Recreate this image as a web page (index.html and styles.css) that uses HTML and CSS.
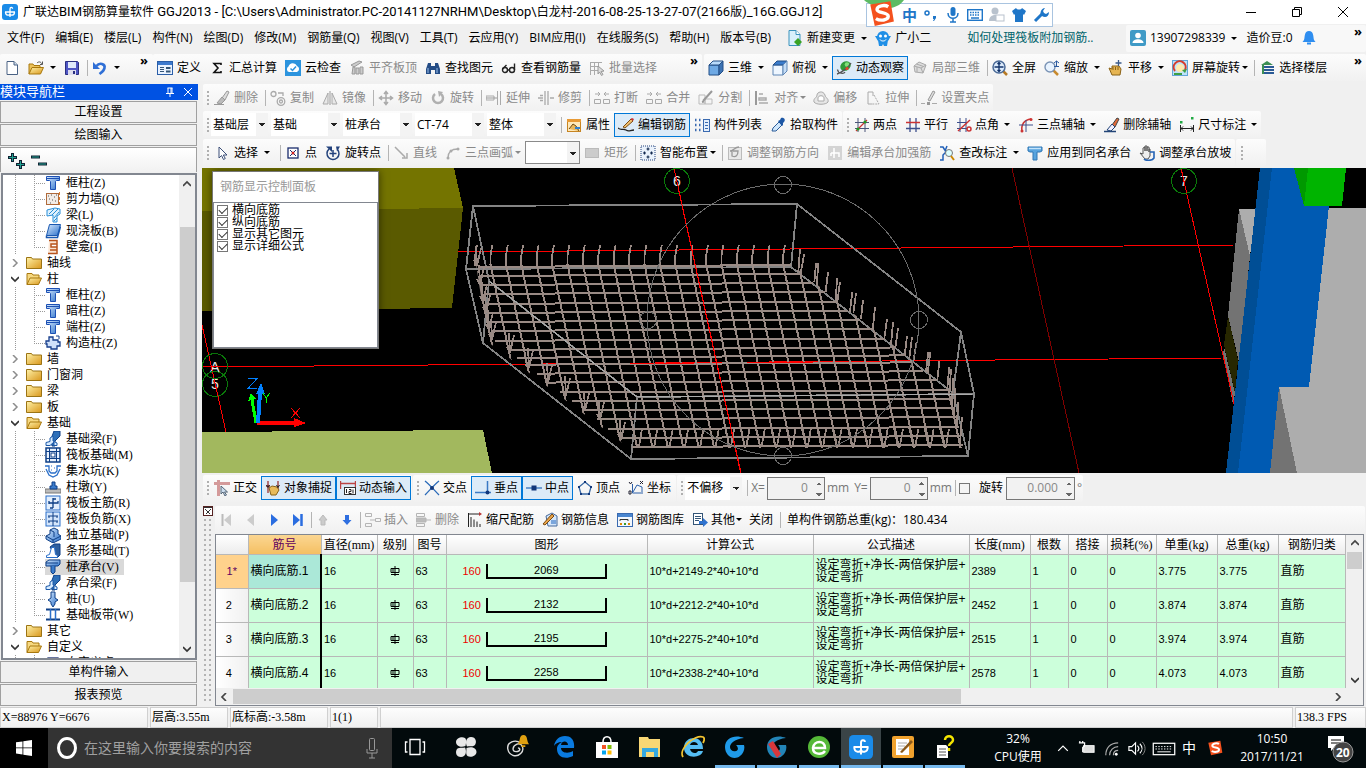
FILE: index.html
```html
<!DOCTYPE html>
<html lang="zh-CN">
<head>
<meta charset="utf-8">
<title>广联达BIM钢筋算量软件 GGJ2013</title>
<link rel="stylesheet" href="styles.css">
</head>
<body>
<svg class="defs" aria-hidden="true">
<defs>
<linearGradient id="gold" x1="0" y1="0" x2="1" y2="1"><stop offset="0" stop-color="#fff2a8"/><stop offset="1" stop-color="#d9971c"/></linearGradient>
<linearGradient id="blu" x1="0" y1="0" x2="1" y2="1"><stop offset="0" stop-color="#d8ebff"/><stop offset="1" stop-color="#2a6fc9"/></linearGradient>
</defs>
<symbol id="app" viewBox="0 0 16 16"><rect width="16" height="16" rx="3" fill="#1a8be8"/><g fill="none" stroke="#fff" stroke-width="1.300"><path d="M8 10V5c0-2 2.500-2 2.600-.3M3 8h10M3.500 8c0 4 4.500 4 4.500 1.500M12.500 8c0 4-4.500 4-4.500 1.500M8 9v4"/></g></symbol>
<symbol id="new" viewBox="0 0 16 16"><path d="M3 1.500h7l3.500 3.500v9.500H3z" fill="#fff" stroke="#4a6284"/><path d="M10 1.500V5h3.500" fill="#cfdcec" stroke="#4a6284"/></symbol>
<symbol id="open" viewBox="0 0 16 16"><path d="M1 14V4h4l1 1.500h6V8" fill="#ecc25a" stroke="#a8780e"/><path d="M1 14L4 7.500h11.500L12.500 14z" fill="url(#gold)" stroke="#a8780e"/><path d="M9 3c2-2 4-1 5 1M14.500 1.500V4.500H12" fill="none" stroke="#555"/></symbol>
<symbol id="fopen" viewBox="0 0 16 16"><path d="M1 13.500V2.500h5l1 1.500h6V7" fill="#f6d880" stroke="#a8780e"/><path d="M1 13.500L4 7h11.500L12.500 13.500z" fill="url(#gold)" stroke="#a8780e"/></symbol>
<symbol id="save" viewBox="0 0 16 16"><path d="M1.500 1.500h12l1 1v12h-13z" fill="#4e55c4" stroke="#2a2f80"/><rect x="4" y="2" width="8" height="6" fill="#dfe9fb"/><rect x="4" y="10" width="8" height="5" fill="#dde"/><rect x="9" y="11" width="2" height="3" fill="#2a2f80"/></symbol>
<symbol id="undo" viewBox="0 0 16 16"><path d="M4.500 6c3-4 9-2 8 2-.5 3-3 4.500-5 6" fill="none" stroke="#2f6fd6" stroke-width="2.600"/><path d="M1 2v7h7z" fill="#2f6fd6"/></symbol>
<symbol id="def" viewBox="0 0 16 16"><rect x=".5" y="1.500" width="15" height="13" fill="#e9f2ff" stroke="#2a5ea8"/><rect x="1" y="2" width="14" height="3" fill="#3d7ace"/><path d="M3 7.500h4M3 9.500h4M3 11.500h4" stroke="#357"/><rect x="9" y="7" width="4.500" height="2" fill="#357"/><rect x="9" y="10.500" width="4.500" height="2" fill="#357"/></symbol>
<symbol id="sum" viewBox="0 0 16 16"><path d="M12 5V3.500H5L9 8l-4 4.500H12V11" fill="none" stroke="#111" stroke-width="1.600"/></symbol>
<symbol id="cloud" viewBox="0 0 16 16"><rect width="16" height="16" fill="#2c94de"/><path d="M4 12a3 3 0 0 1-.5-5.500A4.500 4.500 0 0 1 12 6a3.200 3.200 0 0 1 0 6z" fill="#fff"/><path d="M5.500 8.500l2 2 3.500-4" fill="none" stroke="#2c94de" stroke-width="1.500"/></symbol>
<symbol id="flat" viewBox="0 0 16 16"><path d="M2 5l8-4 3 1-8 5zM4 7h2v7H3zM7 8h3v6H7zM11 7h3v7h-3z" fill="#ccc" stroke="#999"/></symbol>
<symbol id="find" viewBox="0 0 16 16"><path d="M3 3h3v3h4V3h3l2 6v5h-5v-4H6v4H1V9z" fill="#254d86"/><path d="M3 8v5M12 8v5" stroke="#9dc1ec"/></symbol>
<symbol id="glass" viewBox="0 0 16 16"><g fill="none" stroke="#222" stroke-width="1.400"><circle cx="4" cy="10" r="2.500"/><circle cx="11" cy="10" r="2.500"/><path d="M6.500 10h2M1.500 9l4-4M13.500 10V3.500"/></g></symbol>
<symbol id="batch" viewBox="0 0 16 16"><path d="M1 2.500h12M1 6.500h9M1 10.500h8M1.500 2v13M5.500 2v13M9.500 2v5" stroke="#aaa" fill="none"/><path d="M9 6l6 5-3 .5 2 3-1.500 1-2-3.500L9 14z" fill="#ddd" stroke="#999"/></symbol>
<symbol id="cube" viewBox="0 0 16 16"><path d="M1 5h10v10H1z" fill="#6ea9e4" stroke="#234f86"/><path d="M1 5l4-4h10l-4 4z" fill="#b8dafa" stroke="#234f86"/><path d="M11 5l4-4v10l-4 4z" fill="#3c73b4" stroke="#234f86"/></symbol>
<symbol id="cube2" viewBox="0 0 16 16"><path d="M1 5h10v10H1z" fill="#eef6ff" stroke="#5f86b5"/><path d="M1 5l4-4h10l-4 4z" fill="#3b7ccc" stroke="#234f86"/><path d="M11 5l4-4v10l-4 4z" fill="#c6def7" stroke="#5f86b5"/></symbol>
<symbol id="orbit" viewBox="0 0 16 16"><ellipse cx="9.500" cy="6" rx="5.500" ry="4.500" transform="rotate(-35 9.500 6)" fill="#2f9b3a"/><circle cx="11" cy="4.500" r="2.300" fill="#7fe07a"/><path d="M1 14C5 13 13 7 15 3M1.500 9.500C2 14 8 14 9 12" fill="none" stroke="#555" stroke-width="1.300"/><circle cx="11" cy="8.500" r="1.600" fill="#e8452c"/></symbol>
<symbol id="local" viewBox="0 0 16 16"><path d="M2 6l5-4 7 3-3 8-8-1z" fill="#ddd" stroke="#aaa"/><path d="M2 6l7 2 5-3M9 8l2 5M5 7v5M4.500 4l7 2.500" fill="none" stroke="#aaa"/></symbol>
<symbol id="full" viewBox="0 0 16 16"><path d="M11 11l4 4" stroke="#b77a26" stroke-width="2.500"/><circle cx="7" cy="7" r="6" fill="#dcebfb" stroke="#4c6c98" stroke-width="1.500"/><path d="M7 2.500v9M2.500 7h9M5.500 4L7 2.500 8.500 4M5.500 10L7 11.500 8.500 10" fill="none" stroke="#12336b" stroke-width="1.300"/></symbol>
<symbol id="zoom" viewBox="0 0 16 16"><path d="M9 10l5 5" stroke="#c88a2e" stroke-width="2.500"/><circle cx="6" cy="7" r="5" fill="#e8f3ff" stroke="#7a93b5" stroke-width="1.400"/><path d="M12.500 1v6M10 3l2.500-2L15 3M10 6.500h5" fill="none" stroke="#2a5aa0"/></symbol>
<symbol id="pan" viewBox="0 0 16 16"><path d="M1 8l3 1V6h7l2 3-1 6H4z" fill="#e6b553" stroke="#8a6217"/><path d="M10.500 0v6M7.500 3h6" stroke="#3a5a8a" stroke-width="1.300"/><path d="M5 7v3M7.500 7v3M10 7v3" stroke="#8a6217"/></symbol>
<symbol id="rots" viewBox="0 0 16 16"><rect x=".5" y=".5" width="15" height="15" fill="#bfe2fa" stroke="#62a6d8"/><circle cx="8" cy="8" r="4" fill="#ffe9ae"/><path d="M3 11A6 6 0 1 1 13 10" fill="none" stroke="#d63b2c" stroke-width="2"/><path d="M15 9l-2 4-3-3zM2 15h8v-2H2z" fill="#3fa045"/></symbol>
<symbol id="floor" viewBox="0 0 16 16"><path d="M4 7h11M4 10h11M4 13h11" stroke="#2a5a96" stroke-width="2"/><path d="M2 5L8 1l6 4H5v9H3V5z" fill="#3c8e54"/></symbol>
<symbol id="erase" viewBox="0 0 16 16"><path d="M8 8l5-7 2 1-4 8z" fill="#ddd" stroke="#999"/><path d="M3 13l5-6 3 3-4 4z" fill="#bbb" stroke="#999"/><path d="M0 14.500h10" stroke="#999"/></symbol>
<symbol id="copy" viewBox="0 0 16 16"><g fill="none" stroke="#aaa" stroke-width="1.300"><circle cx="3.500" cy="4" r="2.500"/><circle cx="11" cy="11.500" r="3.800"/><circle cx="11" cy="11.500" r="1.500"/><path d="M8 3h5v3"/></g></symbol>
<symbol id="mirror" viewBox="0 0 16 16"><path d="M6 3v11H1zM10 3v11h5z" fill="#e8e8e8" stroke="#aaa"/><path d="M8 1v14" stroke="#999"/></symbol>
<symbol id="move" viewBox="0 0 16 16"><path d="M8 2v12M2 8h12M6 4l2-2.500L10 4M6 12l2 2.500 2-2.500M4 6L1.500 8 4 10M12 6l2.500 2L12 10" fill="none" stroke="#aaa" stroke-width="1.500"/></symbol>
<symbol id="rot" viewBox="0 0 16 16"><path d="M5 4a5 5 0 1 0 6 0" fill="none" stroke="#b0b0b0" stroke-width="2.500"/><path d="M8 1l5 1-4 5z" fill="#b0b0b0"/></symbol>
<symbol id="extend" viewBox="0 0 16 16"><path d="M14.500 1v14M11.500 1v14M0 6h8v4H0z" fill="none" stroke="#aaa"/><path d="M0 8h11" stroke="#999"/></symbol>
<symbol id="trim" viewBox="0 0 16 16"><path d="M7 1v14M10 1v14M0 8h5M12 8h4M2 5.500h3M2 10.500h3" fill="none" stroke="#aaa" stroke-width="1.300"/></symbol>
<symbol id="brk" viewBox="0 0 16 16"><path d="M1 4h5M10 4h5M4 2l2 2-2 2M12 2l-2 2 2 2M.5 9.500h6v4h-6zM9.500 9.500h6v4h-6z" fill="none" stroke="#aaa"/></symbol>
<symbol id="split" viewBox="0 0 16 16"><path d="M1 5h6v9H1zM7 9h7v5H7z" fill="none" stroke="#bbb"/><path d="M5 11L14 1M4 12l2-.5" stroke="#999" stroke-width="2"/></symbol>
<symbol id="align" viewBox="0 0 16 16"><path d="M2 1v14" stroke="#999" stroke-width="2"/><path d="M5 4h4M5 8h7v2H5zM5 13h9" fill="none" stroke="#aaa" stroke-width="1.500"/></symbol>
<symbol id="offset" viewBox="0 0 16 16"><path d="M1 12c-1-4 3-4 3-7s6-5 8 0c0 3 4 3 3 7-2 3-12 3-14 0z" fill="#e6e6e6" stroke="#aaa"/><path d="M5 11V8c0-3 6-3 6 0v3z" fill="#fff" stroke="#aaa"/></symbol>
<symbol id="stretch" viewBox="0 0 16 16"><path d="M3 2h5v4M3 2v12h4" fill="none" stroke="#aaa"/><path d="M9 5l5 9H7" fill="none" stroke="#aaa" stroke-dasharray="2 1"/></symbol>
<symbol id="grip" viewBox="0 0 16 16"><path d="M0 13.500h4M11 13.500h5" stroke="#aaa"/><rect x="6" y="12" width="3" height="3" fill="#999"/><path d="M7 10l5-9 2 1-5 9z" fill="#ddd" stroke="#999"/></symbol>
<symbol id="prop" viewBox="0 0 16 16"><rect x="1.500" y="2.500" width="13" height="12" fill="#ffe9ba" stroke="#c78522"/><rect x="1" y="2" width="14" height="3" fill="#e89a35"/><path d="M3 12l4-5 3 2 3 5" fill="#e9b75c" stroke="#6b4a12"/><path d="M9 11h5" stroke="#2f7fd0" stroke-width="2"/></symbol>
<symbol id="edit" viewBox="0 0 16 16"><path d="M0 11c3 3 5 0 8 2s4 0 8 0" fill="none" stroke="#222" stroke-width="1.300"/><path d="M5 10l8-8 2 2-8 7z" fill="#f0c070" stroke="#7a4b12"/><path d="M12.500 2l2.500 2 1-2-2-1z" fill="#c33"/></symbol>
<symbol id="list" viewBox="0 0 16 16"><path d="M1 3h2M1 8h2M1 13h2M5 3h2M5 8h2M5 13h2" stroke="#3a6ab0" stroke-width="2.500" stroke-dasharray="1.500 1"/><rect x="9.500" y="2.500" width="6" height="12" fill="#e4effc" stroke="#3a6ab0"/><path d="M11 5.500h3M11 8.500h3M11 11.500h3" stroke="#3a6ab0"/></symbol>
<symbol id="pick" viewBox="0 0 16 16"><path d="M2 14l1-3 6-6 3 3-6 6z" fill="#cfe6fb" stroke="#2d5d99"/><path d="M8 4l2-1 1-2c3-1 5 2 3 4l-1 1v2l-1 1z" fill="#1d57a5"/></symbol>
<symbol id="two" viewBox="0 0 16 16"><path d="M4 1v14M11 1v14M1 5.500h14M1 11.500h14" stroke="#4a5578"/><path d="M2 14L13 3" stroke="#c33" stroke-width="1.200"/><circle cx="11" cy="5" r="1.600" fill="#292"/><circle cx="4" cy="12" r="1.600" fill="#292"/></symbol>
<symbol id="par" viewBox="0 0 16 16"><path d="M5 1v14M11 1v14M1 11.500h14" stroke="#3d4f8c" stroke-width="1.300"/><path d="M1 5.500h14" stroke="#c33" stroke-width="1.500"/></symbol>
<symbol id="ang" viewBox="0 0 16 16"><path d="M4 1v14M10 1v14M1 5.500h10M1 11.500h10" stroke="#3d4f8c"/><path d="M2 14L14 3" stroke="#c33" stroke-width="1.500"/><circle cx="13" cy="12" r="2" fill="none" stroke="#c33" stroke-width="1.500"/></symbol>
<symbol id="arc3" viewBox="0 0 16 16"><path d="M4 15C3 8 6 3 13 2" fill="none" stroke="#c33" stroke-width="1.500"/><path d="M8 3v12M1 8h14" stroke="#3d4f8c"/><circle cx="13" cy="2.500" r="1.500" fill="#c33"/><circle cx="4" cy="14" r="1.500" fill="#c33"/></symbol>
<symbol id="dela" viewBox="0 0 16 16"><path d="M8 8l5-7 2 1-4 8z" fill="#e06a3a" stroke="#444"/><path d="M3 13l5-6 3 3-4 4z" fill="#f0f0ff" stroke="#247"/><path d="M0 14.500h12" stroke="#247" stroke-width="1.500"/></symbol>
<symbol id="dim" viewBox="0 0 16 16"><path d="M1.500 8v7M14.500 8v7M1 11.500h14M4 9.500L2 11.500l2 2M12 9.500l2 2-2 2" fill="none" stroke="#222"/><rect x="1" y="4" width="2.500" height="2.500" fill="#2a4"/><rect x="12" y="0" width="2.500" height="2.500" fill="#2a4"/></symbol>
<symbol id="sel" viewBox="0 0 16 16"><path d="M5 2v11l2.500-2.500 2 4 1.800-1-2-3.500H13z" fill="#fff" stroke="#3c4f78"/></symbol>
<symbol id="pt" viewBox="0 0 16 16"><rect x="3" y="3" width="10" height="10" fill="#fff" stroke="#1b2d6d" stroke-width="1.300"/><path d="M5 5l6 6M11 5l-6 6" stroke="#1b2d6d"/><circle cx="8" cy="8" r="1.500" fill="#c22"/></symbol>
<symbol id="rpt" viewBox="0 0 16 16"><path d="M4 4a6 6 0 1 0 8.500.5M8 5v7M4.500 8.500h7" fill="none" stroke="#23427c" stroke-width="1.500"/><path d="M1 1.500h6v5.500zM11 1.500h4l-3 5z" fill="#23427c"/></symbol>
<symbol id="line" viewBox="0 0 16 16"><path d="M2 2l10 10M14 8v5H9" fill="none" stroke="#aaa" stroke-width="1.500"/></symbol>
<symbol id="arc" viewBox="0 0 16 16"><path d="M3 13C3 7 6 4 13 4" fill="none" stroke="#aaa" stroke-width="1.300"/><circle cx="3" cy="13" r="1.500" fill="#aaa"/><circle cx="13" cy="4" r="1.500" fill="#aaa"/><circle cx="6" cy="6" r="1.500" fill="#aaa"/></symbol>
<symbol id="rect" viewBox="0 0 16 16"><rect x="1.500" y="3.500" width="13" height="9" fill="#ccc" stroke="#bbb"/></symbol>
<symbol id="smart" viewBox="0 0 16 16"><rect x="1" y="1" width="14" height="14" fill="#eaf2fc" stroke="#23427c" stroke-dasharray="1 1"/><path d="M8 2.500v3M6.500 4h3M8 10.500v3M6.500 12h3M3 8h3M4.500 6.500v3M10 8h3M11.500 6.500v3" stroke="#12284e" stroke-width="1.200"/></symbol>
<symbol id="dir" viewBox="0 0 16 16"><rect x="1.500" y="2.500" width="13" height="12" fill="#e8e8e8" stroke="#bbb"/><path d="M3 6c3 0 5-4 9-4M5 6v5c4 2 6-1 6-5H6" fill="none" stroke="#999" stroke-width="1.300"/></symbol>
<symbol id="edc" viewBox="0 0 16 16"><rect x="1" y="1" width="14" height="14" fill="#d4d4d4"/><path d="M7 3v10M4 8h8v4M4 8v3" fill="none" stroke="#fff" stroke-width="1.500"/></symbol>
<symbol id="chk" viewBox="0 0 16 16"><path d="M1 2h3l3 5-3 3v5H1M8 1l-2 5" fill="none" stroke="#2160b8" stroke-width="1.500"/><circle cx="10" cy="8" r="3.500" fill="#dff" stroke="#777"/><path d="M12 11l3 4" stroke="#c80" stroke-width="2"/></symbol>
<symbol id="apply" viewBox="0 0 16 16"><path d="M1 2h14v4l-2 1h-3v8H6V7H3L1 6z" fill="#58a4de" stroke="#2f76b4"/><path d="M2 3.500h12" stroke="#c4e4fc" stroke-width="1.500"/></symbol>
<symbol id="slope" viewBox="0 0 16 16"><path d="M1 8l3 1V3l2-1v4-5l2 0v5-4h2v5-3h1v7l-2 3H6z" fill="#eee" stroke="#555"/><path d="M11 7h4v6c-2 3-8 3-10 1" fill="none" stroke="#2563b5" stroke-width="1.600"/></symbol>
<symbol id="orth" viewBox="0 0 16 16"><path d="M0 3.500h16M4.500 0v16" stroke="#d49a9a" stroke-width="3"/><path d="M7 6v8l2-2 2 4 1.500-1-2-3h3z" fill="#cde" stroke="#567"/></symbol>
<symbol id="snap" viewBox="0 0 16 16"><path d="M1 6h4M3 1v12M13 1v8" stroke="#933" stroke-width="1.300"/><path d="M4 8l3-2 5 1 2 3-3 5H6z" fill="#e8bb5a" stroke="#8a6217"/><path d="M1.500 5L3 7.500 4.500 5M11.500 5L13 7.500 14.500 5" fill="none" stroke="#222"/></symbol>
<symbol id="dyn" viewBox="0 0 16 16"><path d="M0 3.500h16M.5 1v8M15.500 1v8" stroke="#b44" stroke-width="1.400"/><rect x="4.500" y="7.500" width="11" height="7" fill="#fff" stroke="#333"/><path d="M6.500 9v4M9 9.500h2v2H9v2h2.500M13 9.500v4" stroke="#222" fill="none"/></symbol>
<symbol id="xpt" viewBox="0 0 16 16"><path d="M1 1c5 4 9 9 14 14M15 1C10 5 6 10 1 15" stroke="#2a6ab8" stroke-width="1.300" fill="none"/><circle cx="8" cy="8" r="2" fill="#12377a"/></symbol>
<symbol id="perp" viewBox="0 0 16 16"><path d="M0 12.500h16M12.500 1v12" stroke="#3a79c4" stroke-width="1.500"/><circle cx="12.500" cy="12.500" r="2" fill="#12377a"/></symbol>
<symbol id="mid" viewBox="0 0 16 16"><path d="M0 8h16" stroke="#4a82c4" stroke-width="1.500"/><rect x="5.500" y="5.500" width="5" height="5" fill="#12377a"/></symbol>
<symbol id="vert" viewBox="0 0 16 16"><path d="M8 2l6 5-2 7H4L2 7z" fill="none" stroke="#3a69a4" stroke-width="1.300"/><g fill="#12377a"><rect x="7" y="1" width="2" height="2"/><rect x="1" y="6" width="2" height="2"/><rect x="13" y="6" width="2" height="2"/><rect x="3" y="13" width="2" height="2"/><rect x="11" y="13" width="2" height="2"/></g></symbol>
<symbol id="coord" viewBox="0 0 16 16"><path d="M4.500 4v9H13M5 12l4-7 5 2v7" fill="none" stroke="#2a5ea8"/><path d="M1 2l1.500 2L4 2M12 1l3 3M15 1l-3 3M1 11h2v3H1z" fill="none" stroke="#223"/></symbol>
<symbol id="first" viewBox="0 0 16 16"><path d="M3.500 2v12" stroke="#bbb" stroke-width="2"/><path d="M12 2v12L5 8z" fill="#ccc"/></symbol>
<symbol id="prev" viewBox="0 0 16 16"><path d="M11 2v12L4 8z" fill="#ccc"/></symbol>
<symbol id="next" viewBox="0 0 16 16"><path d="M4 2v12l7-6z" fill="#2a6de0"/></symbol>
<symbol id="last" viewBox="0 0 16 16"><path d="M2 2v12l7-6z" fill="#2a6de0"/><path d="M10.500 2v12" stroke="#2a6de0" stroke-width="2.500"/></symbol>
<symbol id="up" viewBox="0 0 16 16"><path d="M7 3l4 5H9v5H5V8H3z" fill="#ccc" stroke="#bbb"/></symbol>
<symbol id="down" viewBox="0 0 16 16"><path d="M7 13l4.500-5H9V3H5v5H2.500z" fill="#2f6fe0"/></symbol>
<symbol id="ins" viewBox="0 0 16 16"><path d="M.5 1.500h6v3h-6zM.5 11.500h6v3h-6zM10.500 6.500h5v3h-5zM5 8h5" fill="none" stroke="#b5b5b5"/></symbol>
<symbol id="rem" viewBox="0 0 16 16"><path d="M.5 1.500h8v3h-8zM.5 11.500h8v3h-8z" fill="none" stroke="#b5b5b5"/><path d="M0 6h10v4H0zM10 8h5" fill="#bbb" stroke="#b5b5b5"/></symbol>
<symbol id="scale" viewBox="0 0 16 16"><path d="M1.500 1v14M1 2h12M4 5v10M7 7.500V15M10 9.500V15M13 12v3" stroke="#222"/><path d="M12 0l3 2-3 2z" fill="#b33"/></symbol>
<symbol id="info" viewBox="0 0 16 16"><path d="M4 4l6-3 5 3v10H6z" fill="#d5e6fa" stroke="#476a9b"/><path d="M1 12l9-10 2 2-9 9z" fill="#e9a44a" stroke="#7a4b12"/><rect x="9" y="8" width="5" height="4" fill="#7ba6dc"/></symbol>
<symbol id="lib" viewBox="0 0 16 16"><rect x=".5" y="1.500" width="15" height="13" fill="#f2f7fd" stroke="#3a6ab0"/><rect x="1" y="2" width="14" height="3" fill="#4a86d0"/><path d="M3 9V7.500h8V9" fill="none" stroke="#333"/><path d="M3 12h2M11 12h2" stroke="#d80" stroke-width="2"/><path d="M7 12h2" stroke="#393" stroke-width="2"/></symbol>
<symbol id="other" viewBox="0 0 16 16"><rect x="1.500" y="1.500" width="9" height="11" fill="#fff" stroke="#357"/><path d="M3 4.500h6M3 6.500h6M3 8.500h4" stroke="#357"/><path d="M7 9h4V6l5 4.500-5 4.500v-3H7z" fill="#2f73cf"/></symbol>
<symbol id="newc" viewBox="0 0 16 16"><path d="M2 .5h7l4 4v11H2z" fill="#d9f0fb" stroke="#3b93bd"/><path d="M9 .5v4h4" fill="#fff" stroke="#3b93bd"/><path d="M11 8l4 4-4 4-4-4z" fill="#3aa324"/></symbol>
<symbol id="pet" viewBox="0 0 16 16"><circle cx="8" cy="7" r="6" fill="#1f8fe6"/><path d="M0 6h3v5zM16 6h-3v5zM3 10h10l-1 6H9l-1-2-1 2H4z" fill="#1f8fe6"/><circle cx="5.500" cy="6" r="1.500" fill="#fff"/><circle cx="10.500" cy="6" r="1.500" fill="#fff"/><path d="M5 9.500c1 2 5 2 6 0" fill="none" stroke="#fff"/></symbol>
<symbol id="user" viewBox="0 0 16 16"><rect width="16" height="16" rx="2" fill="#3f9ac6"/><circle cx="8" cy="5.500" r="2.800" fill="#fff"/><path d="M2.500 13c0-5 11-5 11 0z" fill="#fff"/></symbol>
<symbol id="bell" viewBox="0 0 16 16"><path d="M8 1c5 0 4 6 5 9l1.500 2h-13L3 10c1-3 0-9 5-9z" fill="#2f8ef0"/><path d="M6 13.500h4" stroke="#2f8ef0" stroke-width="2"/></symbol>
<symbol id="col" viewBox="0 0 16 16"><path d="M1.500 1.500h13v4h-3l-1 1v8h-5v-8l-1-1h-3z" fill="url(#blu)" stroke="#1c50b4"/><path d="M2 3.500h12" stroke="#1c50b4"/></symbol>
<symbol id="wall" viewBox="0 0 16 16"><rect x="1.500" y="2.500" width="12" height="11" fill="#f2ece6" stroke="#b06a3a"/><path d="M3 5h1M6 4h1M9 6h1M4 8h1M7 9h1M10 10h1M5 12h1M11 4h1" stroke="#555"/><path d="M14.500 1v14" stroke="#d87b2a" stroke-dasharray="3 2"/></symbol>
<symbol id="beam" viewBox="0 0 16 16"><path d="M2 3l8-2 5 1v5l-3 2v6H8V8L2 9z" fill="#dff1fd" stroke="#2a8fd8"/><path d="M4 7l5-5M7 8l6-6M9 11l5-6M9 14l3-3" stroke="#2a8fd8"/></symbol>
<symbol id="slab" viewBox="0 0 16 16"><path d="M4.500 1.500h11l-3 11h-11z" fill="url(#blu)" stroke="#1a58b0"/><path d="M1.500 12.500v2h11l3-11" fill="none" stroke="#1a58b0" stroke-width="1.500"/></symbol>
<symbol id="niche" viewBox="0 0 16 16"><path d="M4 1.500h8v13H3M12 5H6v3h6M12 11H5" fill="#fbe5d3" stroke="#b8541d" stroke-width="1.500"/></symbol>
<symbol id="gz" viewBox="0 0 16 16"><path d="M4 2h4v3h5v2h2v4h-3v3H6v-2H2V9H1V6h3z" fill="#cfe0fa" stroke="#173e8c" stroke-width="1.300"/><path d="M11 1h3v3" fill="none" stroke="#173e8c"/></symbol>
<symbol id="fb" viewBox="0 0 16 16"><path d="M6 8l3-8h6v5l-5 5v5H7z" fill="#2e6fb8" stroke="#0e3f86"/><path d="M1 14.500v-3l4-1V7l3-2v5l4 2v2.500H9V11L5 14.500z" fill="#d9ecff" stroke="#1b58a8"/></symbol>
<symbol id="raft" viewBox="0 0 16 16"><rect x="1" y="1" width="14" height="14" fill="#e7f1fe" stroke="#0e3f86" stroke-width="1.500"/><path d="M4.500 1v14M11.500 1v14M1 4.500h14M1 11.500h14" stroke="#0e3f86"/><rect x="6" y="6" width="4" height="4" fill="#fff" stroke="#0e3f86"/></symbol>
<symbol id="pit" viewBox="0 0 16 16"><path d="M0 3h4v5l2 2h4l2-2V3h4M1 6l3 6 4 2 4-2 3-6" fill="none" stroke="#2a6fc9" stroke-width="1.300"/><path d="M6 3h1M9 5h1M6 7h1" stroke="#2a6fc9"/></symbol>
<symbol id="pier" viewBox="0 0 16 16"><path d="M0 10h16v4H0z" fill="#bbb" stroke="#777"/><path d="M5 10V7h2V3h3v4h2v3z" fill="#3b7ccc" stroke="#0e3f86"/></symbol>
<symbol id="mr" viewBox="0 0 16 16"><rect x="1" y="1" width="14" height="14" fill="#e3effd" stroke="#2a6fc9"/><path d="M8 3v10M4 6v3M4 8h9v-2M8 4h3M5 13h3" stroke="#0e3f86" fill="none" stroke-width="1.300"/></symbol>
<symbol id="nr" viewBox="0 0 16 16"><rect x="1" y="1" width="14" height="14" fill="#d5e6fb" stroke="#2a6fc9"/><path d="M8 1v14M3 5h10M3 10h10M4 5v2M12 5v2M4 10v2M12 10v2" stroke="#0e3f86" fill="none"/></symbol>
<symbol id="iso" viewBox="0 0 16 16"><path d="M1 9l4-2V3l4-2 4 2v4l3 2v3l-8 4-7-4z" fill="url(#blu)" stroke="#0e3f86"/><path d="M1 9l7 4 8-4M8 13v3M5 3l4 2v5" fill="none" stroke="#0e3f86"/></symbol>
<symbol id="strip" viewBox="0 0 16 16"><path d="M5 4l4-3h6v11l-3 3z" fill="#2e5f9e" stroke="#0e3f86"/><path d="M1.500 14.500v-2l3-1 2-7h3l1 7 2 1v2z" fill="#fff" stroke="#2a6fc9"/></symbol>
<symbol id="cap" viewBox="0 0 16 16"><path d="M1 3l3-2h11v4l-2 2H1z" fill="url(#blu)" stroke="#0e3f86"/><path d="M1 4h12M6 7v6l2 2 2-2V7" fill="#3b7ccc" stroke="#0e3f86"/></symbol>
<symbol id="pile" viewBox="0 0 16 16"><path d="M6 1h4v6l3 2-3 2v2l-2 3-2-3v-2L3 9l3-2z" fill="url(#blu)" stroke="#0e3f86"/></symbol>
<symbol id="band" viewBox="0 0 16 16"><path d="M1 2.500h14M1 12.500h14" stroke="#0e3f86" stroke-width="2"/><path d="M5.500 2v11M10.500 2v11" stroke="#2a6fc9" stroke-width="1.500"/></symbol>
<symbol id="fold" viewBox="0 0 16 16"><path d="M.5 13.500v-11h5l1 1.500h9v9.500z" fill="url(#gold)" stroke="#9c7414"/></symbol>
<symbol id="r" viewBox="0 0 8 8"><path d="M2 0l4 4-4 4" fill="none" stroke="#8c8c8c" stroke-width="1.500"/></symbol>
<symbol id="d" viewBox="0 0 8 8"><path d="M0 2l4 4 4-4" fill="none" stroke="#333" stroke-width="1.700"/></symbol>
<symbol id="u" viewBox="0 0 8 8"><path d="M0 6l4-4 4 4" fill="none" stroke="#444" stroke-width="1.700"/></symbol>
<symbol id="l" viewBox="0 0 8 8"><path d="M6 0L2 4l4 4" fill="none" stroke="#444" stroke-width="1.700"/></symbol>
<symbol id="rr" viewBox="0 0 8 8"><path d="M2 0l4 4-4 4" fill="none" stroke="#444" stroke-width="1.700"/></symbol>
<symbol id="grade" viewBox="0 0 10 10"><path d="M5 0v10M1 2.500h8v4H1zM3 2v5M1 8.500h8" fill="none" stroke="#000"/></symbol>
<symbol id="sogou" viewBox="0 0 24 24"><path d="M2 4L20 1l3 18-17 4z" fill="#f4511e"/><path d="M18 6c-3-2-10-1-10 2.500C8 12 18 10.500 18 14.500c0 3.500-7 4.500-11 2" fill="none" stroke="#fff" stroke-width="3"/></symbol>
</svg>

<header class="titlebar">
  <svg class="i"><use href="#app"/></svg>
  <span class="title">广联达<span>BIM</span>钢筋算量软件<span> GGJ2013 - [C:\Users\Administrator.PC-20141127NRHM\Desktop\</span>白龙村<span>-2016-08-25-13-27-07(2166</span>版<span>)_16G.GGJ12]</span></span>
  <div class="ime">
    <svg class="leaf" viewBox="0 0 40 10"><path d="M0 0h40c-4 6-12 9-20 8S4 4 0 0z" fill="#5dbb63"/></svg>
    <svg class="sg"><use href="#sogou"/></svg>
    <b>中</b>
    <svg class="i" viewBox="0 0 16 16"><circle cx="4" cy="6" r="2" fill="none" stroke="#1f76c8" stroke-width="1.500"/><path d="M10 9h3v2l-2 3h-1l1-2h-1z" fill="#1f76c8"/></svg>
    <svg class="i" viewBox="0 0 16 16"><rect x="5.500" y="0" width="5" height="9" rx="2.500" fill="#1f76c8"/><path d="M3 6c0 7 10 7 10 0M8 11v4M5 15h6" fill="none" stroke="#1f76c8" stroke-width="1.500"/></svg>
    <svg class="i" viewBox="0 0 16 16"><rect x=".7" y="2.700" width="14.600" height="10.600" fill="none" stroke="#1f76c8" stroke-width="1.400"/><path d="M3 5.500h10M3 8h10" stroke="#1f76c8" stroke-width="1.500" stroke-dasharray="1.500 1"/><path d="M4 11h8" stroke="#1f76c8" stroke-width="1.500"/></svg>
    <svg class="i" viewBox="0 0 16 16"><circle cx="6" cy="4" r="3.500" fill="#b9c2cd"/><path d="M0 14c0-8 12-8 12 0z" fill="#b9c2cd"/><rect x="7" y="8" width="8" height="6" fill="#fff" stroke="#b9c2cd"/></svg>
    <svg class="i" viewBox="0 0 16 16"><path d="M1 4l4-3c1 2 5 2 6 0l4 3-2 4-1-1v8H4V7L3 8z" fill="#1f76c8"/></svg>
    <svg class="i" viewBox="0 0 16 16"><path d="M2 14L9 7" stroke="#1f76c8" stroke-width="3"/><path d="M12 1l-2 3 1 2 2 1 3-2c0 5-4 6-7 4s-1-8 3-8z" fill="#1f76c8"/></svg>
  </div>
  <div class="winctl">
    <button aria-label="最小化"><svg viewBox="0 0 10 10"><path d="M0 5.500h10" stroke="#000"/></svg></button>
    <button aria-label="还原"><svg viewBox="0 0 10 10"><path d="M.5 2.500h7v7h-7zM2.500 2.500v-2h7v7h-2" fill="none" stroke="#000"/></svg></button>
    <button aria-label="关闭"><svg viewBox="0 0 10 10"><path d="M0 0l10 10M10 0L0 10" stroke="#000"/></svg></button>
  </div>
</header>

<div class="menurow">
  <nav class="panel menu">
    <button>文件(F)</button><button>编辑(E)</button><button>楼层(L)</button><button>构件(N)</button><button>绘图(D)</button><button>修改(M)</button><button>钢筋量(Q)</button><button>视图(V)</button><button>工具(T)</button><button>云应用(Y)</button><button>BIM应用(I)</button><button>在线服务(S)</button><button>帮助(H)</button><button>版本号(B)</button>
  </nav>
  <div class="panel change">
    <button class="b"><svg class="i"><use href="#newc"/></svg>新建变更<i class="car wide"></i></button>
    <button class="b"><svg class="i"><use href="#pet"/></svg>广小二</button>
  </div>
  <a class="tip" href="#help">如何处理筏板附加钢筋..</a>
  <div class="panel account">
    <button class="b"><svg class="i"><use href="#user"/></svg>13907298339<i class="car wide"></i></button>
    <span class="bean">造价豆:0</span>
    <button class="b" aria-label="通知"><svg class="i"><use href="#bell"/></svg></button>
    <button class="more">»</button>
  </div>
</div>

<div class="toprow">
  <div class="panel std">
    <button class="b" aria-label="新建"><svg class="i"><use href="#new"/></svg></button>
    <button class="b" aria-label="打开"><svg class="i"><use href="#open"/></svg><i class="car wide"></i></button>
    <button class="b" aria-label="保存"><svg class="i"><use href="#save"/></svg></button><i class="sep"></i>
    <button class="b" aria-label="撤销"><svg class="i"><use href="#undo"/></svg><i class="car wide"></i></button>
    <button class="more">»</button>
  </div>
  <div class="panel calc">
    <button class="b"><svg class="i"><use href="#def"/></svg>定义</button>
    <button class="b"><svg class="i"><use href="#sum"/></svg>汇总计算</button>
    <button class="b"><svg class="i"><use href="#cloud"/></svg>云检查</button>
    <button class="b off"><svg class="i"><use href="#flat"/></svg>平齐板顶</button>
    <button class="b"><svg class="i"><use href="#find"/></svg>查找图元</button>
    <button class="b"><svg class="i"><use href="#glass"/></svg>查看钢筋量</button>
    <button class="b off"><svg class="i"><use href="#batch"/></svg>批量选择</button>
    <button class="more">»</button>
  </div>
  <div class="panel view">
    <button class="b"><svg class="i"><use href="#cube"/></svg>三维<i class="car wide"></i></button>
    <button class="b"><svg class="i"><use href="#cube2"/></svg>俯视<i class="car wide"></i></button>
    <button class="b on"><svg class="i"><use href="#orbit"/></svg>动态观察</button>
    <button class="b off"><svg class="i"><use href="#local"/></svg>局部三维</button><i class="sep"></i>
    <button class="b"><svg class="i"><use href="#full"/></svg>全屏</button>
    <button class="b"><svg class="i"><use href="#zoom"/></svg>缩放<i class="car wide"></i></button>
    <button class="b"><svg class="i"><use href="#pan"/></svg>平移<i class="car wide"></i></button>
    <button class="b"><svg class="i"><use href="#rots"/></svg>屏幕旋转<i class="car"></i></button><i class="sep"></i>
    <button class="b"><svg class="i"><use href="#floor"/></svg>选择楼层</button>
    <button class="more">»</button>
  </div>
</div>

<main class="work">
<aside class="side">
  <div class="sidehead"><span>模块导航栏</span>
    <svg viewBox="0 0 10 10"><path d="M2.500 1h5M3 1v5M7 1v5M6 1v5M1 6.500h8M5 6v4" stroke="#fff" fill="none"/></svg>
    <svg viewBox="0 0 10 10"><path d="M1 1l8 8M9 1L1 9" stroke="#fff" fill="none"/></svg></div>
  <button class="nav">工程设置</button>
  <button class="nav">绘图输入</button>
  <div class="expand">
    <svg viewBox="0 0 42 18"><g stroke="#123" stroke-width="3"><path d="M1 5.500h9M5.500 1v9M9 12.500h9M13.500 8v9M24 5h9M31 12h9"/></g><g stroke="#20a090"><path d="M2 5.500h7M5.500 2v7M10 12.500h7M13.500 9v7M25 5h7M32 12h7"/></g></svg>
  </div>
  <div class="treebox">
    <ul class="tree">
      <li class="lf"><svg class="i"><use href="#col"/></svg>框柱(Z)</li>
      <li class="lf"><svg class="i"><use href="#wall"/></svg>剪力墙(Q)</li>
      <li class="lf"><svg class="i"><use href="#beam"/></svg>梁(L)</li>
      <li class="lf"><svg class="i"><use href="#slab"/></svg>现浇板(B)</li>
      <li class="lf end"><svg class="i"><use href="#niche"/></svg>壁龛(I)</li>
      <li class="fd"><svg class="ar"><use href="#r"/></svg><svg class="i"><use href="#fold"/></svg>轴线</li>
      <li class="fd"><svg class="ar"><use href="#d"/></svg><svg class="i"><use href="#fopen"/></svg>柱</li>
      <li class="lf"><svg class="i"><use href="#col"/></svg>框柱(Z)</li>
      <li class="lf"><svg class="i"><use href="#col"/></svg>暗柱(Z)</li>
      <li class="lf"><svg class="i"><use href="#col"/></svg>端柱(Z)</li>
      <li class="lf end"><svg class="i"><use href="#gz"/></svg>构造柱(Z)</li>
      <li class="fd"><svg class="ar"><use href="#r"/></svg><svg class="i"><use href="#fold"/></svg>墙</li>
      <li class="fd"><svg class="ar"><use href="#r"/></svg><svg class="i"><use href="#fold"/></svg>门窗洞</li>
      <li class="fd"><svg class="ar"><use href="#r"/></svg><svg class="i"><use href="#fold"/></svg>梁</li>
      <li class="fd"><svg class="ar"><use href="#r"/></svg><svg class="i"><use href="#fold"/></svg>板</li>
      <li class="fd"><svg class="ar"><use href="#d"/></svg><svg class="i"><use href="#fopen"/></svg>基础</li>
      <li class="lf"><svg class="i"><use href="#fb"/></svg>基础梁(F)</li>
      <li class="lf"><svg class="i"><use href="#raft"/></svg>筏板基础(M)</li>
      <li class="lf"><svg class="i"><use href="#pit"/></svg>集水坑(K)</li>
      <li class="lf"><svg class="i"><use href="#pier"/></svg>柱墩(Y)</li>
      <li class="lf"><svg class="i"><use href="#mr"/></svg>筏板主筋(R)</li>
      <li class="lf"><svg class="i"><use href="#nr"/></svg>筏板负筋(X)</li>
      <li class="lf"><svg class="i"><use href="#iso"/></svg>独立基础(P)</li>
      <li class="lf"><svg class="i"><use href="#strip"/></svg>条形基础(T)</li>
      <li class="lf"><span class="cur"><svg class="i"><use href="#cap"/></svg>桩承台(V)</span></li>
      <li class="lf"><svg class="i"><use href="#fb"/></svg>承台梁(F)</li>
      <li class="lf"><svg class="i"><use href="#pile"/></svg>桩(U)</li>
      <li class="lf end"><svg class="i"><use href="#band"/></svg>基础板带(W)</li>
      <li class="fd"><svg class="ar"><use href="#r"/></svg><svg class="i"><use href="#fold"/></svg>其它</li>
      <li class="fd"><svg class="ar"><use href="#d"/></svg><svg class="i"><use href="#fopen"/></svg>自定义</li>
      <li class="lf"><svg class="i"><use href="#pt"/></svg>自定义点</li>
    </ul>
    <div class="vs"><svg class="ar"><use href="#u"/></svg><i class="thumb"></i><svg class="ar"><use href="#d"/></svg></div>
  </div>
  <button class="nav">单构件输入</button>
  <button class="nav">报表预览</button>
</aside>

<section class="right">
  <div class="row r1"><div class="panel"><i class="grip"></i>
    <button class="b off"><svg class="i"><use href="#erase"/></svg>删除</button><i class="sep"></i>
    <button class="b off"><svg class="i"><use href="#copy"/></svg>复制</button>
    <button class="b off"><svg class="i"><use href="#mirror"/></svg>镜像</button><i class="sep"></i>
    <button class="b off"><svg class="i"><use href="#move"/></svg>移动</button>
    <button class="b off"><svg class="i"><use href="#rot"/></svg>旋转</button><i class="sep"></i>
    <button class="b off"><svg class="i"><use href="#extend"/></svg>延伸</button>
    <button class="b off"><svg class="i"><use href="#trim"/></svg>修剪</button><i class="sep"></i>
    <button class="b off"><svg class="i"><use href="#brk"/></svg>打断</button>
    <button class="b off"><svg class="i"><use href="#brk"/></svg>合并</button>
    <button class="b off"><svg class="i"><use href="#split"/></svg>分割</button><i class="sep"></i>
    <button class="b off"><svg class="i"><use href="#align"/></svg>对齐<i class="car"></i></button>
    <button class="b off"><svg class="i"><use href="#offset"/></svg>偏移</button>
    <button class="b off"><svg class="i"><use href="#stretch"/></svg>拉伸</button><i class="sep"></i>
    <button class="b off"><svg class="i"><use href="#grip"/></svg>设置夹点</button>
  </div></div>

  <div class="row r2"><div class="panel"><i class="grip"></i>
    <select class="combo s" aria-label="楼层"><option>基础层</option></select>
    <select class="combo" aria-label="构件分类"><option>基础</option></select>
    <select class="combo" aria-label="构件类型"><option>桩承台</option></select>
    <select class="combo" aria-label="构件"><option>CT-74</option></select>
    <select class="combo" aria-label="单元"><option>整体</option></select><i class="sep"></i>
    <button class="b"><svg class="i"><use href="#prop"/></svg>属性</button>
    <button class="b on"><svg class="i"><use href="#edit"/></svg>编辑钢筋</button>
    <button class="b"><svg class="i"><use href="#list"/></svg>构件列表</button>
    <button class="b"><svg class="i"><use href="#pick"/></svg>拾取构件</button>
  </div><div class="panel tight"><i class="grip"></i>
    <button class="b"><svg class="i"><use href="#two"/></svg>两点</button>
    <button class="b"><svg class="i"><use href="#par"/></svg>平行</button>
    <button class="b"><svg class="i"><use href="#ang"/></svg>点角<i class="car wide"></i></button>
    <button class="b"><svg class="i"><use href="#arc3"/></svg>三点辅轴<i class="car wide"></i></button>
    <button class="b"><svg class="i"><use href="#dela"/></svg>删除辅轴</button>
    <button class="b"><svg class="i"><use href="#dim"/></svg>尺寸标注<i class="car wide"></i></button>
  </div></div>

  <div class="row r3"><div class="panel"><i class="grip"></i>
    <button class="b"><svg class="i"><use href="#sel"/></svg>选择<i class="car wide"></i></button><i class="sep w"></i>
    <button class="b"><svg class="i"><use href="#pt"/></svg>点</button>
    <button class="b"><svg class="i"><use href="#rpt"/></svg>旋转点</button><i class="sep"></i>
    <button class="b off"><svg class="i"><use href="#line"/></svg>直线</button>
    <button class="b off"><svg class="i"><use href="#arc"/></svg>三点画弧<i class="car"></i></button>
    <select class="combo box" aria-label="画弧方式"><option></option></select>
    <button class="b off"><svg class="i"><use href="#rect"/></svg>矩形</button><i class="sep"></i>
    <button class="b"><svg class="i"><use href="#smart"/></svg>智能布置<i class="car"></i></button><i class="sep"></i>
    <button class="b off"><svg class="i"><use href="#dir"/></svg>调整钢筋方向</button>
    <button class="b off"><svg class="i"><use href="#edc"/></svg>编辑承台加强筋</button>
    <button class="b"><svg class="i"><use href="#chk"/></svg>查改标注<i class="car wide"></i></button>
    <button class="b"><svg class="i"><use href="#apply"/></svg>应用到同名承台</button>
    <button class="b"><svg class="i"><use href="#slope"/></svg>调整承台放坡</button>
  </div><div class="panel stub"><i class="grip"></i></div></div>

  <div class="canvas">
    <svg class="scene" viewBox="202 168 1164 305" preserveAspectRatio="xMinYMin slice" shape-rendering="crispEdges">
      <rect x="202" y="168" width="1164" height="305"/>
      <path fill="#747400" d="M202 168H454L463 208 202 211z"/><path fill="#5a5a00" d="M202 211L463 208 452 308 202 311z"/>
      <path fill="#a2b85e" d="M202 432L483 430 492 473H202z"/>
      <path fill="#adadad" d="M1239 209H1256L1250 256zM1328 208H1366V473H1297L1279 387H1309z"/>
      <path fill="#737373" d="M1239 209L1250 256 1239 362 1228 316zM1224 347L1235 393 1233 404 1223 355zM1279 387L1297 473H1270z"/>
      <path fill="#272700" d="M1228 316L1238 360 1235 393 1224 345z"/>
      <path fill="#004e95" d="M1260 168H1272L1238 473H1226z"/>
      <path fill="#005ab2" d="M1272 168H1294L1304 206H1329L1309 387H1279L1270 473H1238z"/>
      <path fill="#090" d="M1294 168H1308L1304 206z"/><path fill="#00b400" d="M1308 168H1346L1342 206H1304z"/>
      <g class="axis"><text x="677" y="186">6</text><text x="1184" y="186">7</text><text x="215" y="372">A</text><text x="215" y="389">5</text></g>
      <g fill="none" stroke="#f00"><path d="M202 367L1223 358M458 252L1235 245M674 168L741 473M1181 168L1234 404M202 325L226 432"/><path stroke="#800000" d="M1012 168L1079 473"/></g>
      <g fill="none" stroke="#0a7a0a"><circle cx="677" cy="181" r="12.500"/><circle cx="1184" cy="181" r="12.500"/><circle cx="215" cy="366" r="12.500"/><circle cx="215" cy="384" r="12.500"/></g>
      <g fill="none" stroke="#848484" stroke-width="1.800"><path d="M473 206L797 204 961 332 974 394 968 456 631 459 483 343 466 269z"/><path d="M473 206L489 281 637 397 974 394M489 281L483 343M637 397L631 459M466 269L791 267 797 204M791 267L953 393 961 332M953 393L968 456"/></g>
      <clipPath id="slabclip"><path d="M476 264H791L951 391 964 448 632 450 488 342z"/></clipPath>
      <path id="bars" fill="none" stroke="#998a84" stroke-width="2" clip-path="url(#slabclip)"/>
      <path id="rows" fill="none" stroke="#998a84" stroke-width="2"/>
      <path id="hooks" fill="none" stroke="#998a84" stroke-width="1.800"/>
      <path d="M489 281L637 397 974 394" fill="none" stroke="#aaa"/><path d="M678 187L740 470M630 363H694M747 362H813" fill="none" stroke="#f00"/>
      <g fill="none" stroke="#6c6c6c"><circle cx="783" cy="320" r="136"/><circle cx="783" cy="185" r="8.500"/><circle cx="783" cy="456" r="8.500"/><circle cx="648" cy="320" r="8.500"/><circle cx="919" cy="320" r="8.500"/></g>
      <path d="M257 423H295" stroke="red" stroke-width="4"/><path d="M294 418L306 423 294 427z" fill="red"/>
      <path d="M256 423L252 400" stroke="#0f0" stroke-width="3"/><path d="M248 401L251 393 256 399z" fill="#0f0"/>
      <path d="M258 423L260 392" stroke="#0080ff" stroke-width="4"/><path d="M256 394L261 383 265 394z" fill="#0080ff"/>
      <path d="M248 378.500H257L248 388.500H257" fill="none" stroke="#0080ff"/><path d="M263 393L266 398 270 393M266 398V403" fill="none" stroke="#0f0"/><path d="M291 408L300 418M300 408L291 418" stroke="red"/>
    </svg>
    <div class="float">
      <h2>钢筋显示控制面板</h2>
      <div class="checks">
        <label><input type="checkbox" checked>横向底筋</label>
        <label><input type="checkbox" checked>纵向底筋</label>
        <label><input type="checkbox" checked>显示其它图元</label>
        <label><input type="checkbox" checked>显示详细公式</label>
      </div>
    </div>
  </div>

  <div class="row snap"><div class="panel"><i class="grip"></i>
    <button class="b"><svg class="i"><use href="#orth"/></svg>正交</button>
    <button class="b on"><svg class="i"><use href="#snap"/></svg>对象捕捉</button>
    <button class="b on"><svg class="i"><use href="#dyn"/></svg>动态输入</button>
  </div><div class="panel"><i class="grip"></i>
    <button class="b"><svg class="i"><use href="#xpt"/></svg>交点</button>
    <button class="b on"><svg class="i"><use href="#perp"/></svg>垂点</button>
    <button class="b on"><svg class="i"><use href="#mid"/></svg>中点</button>
    <button class="b"><svg class="i"><use href="#vert"/></svg>顶点</button>
    <button class="b"><svg class="i"><use href="#coord"/></svg>坐标</button>
  </div><div class="panel"><i class="grip"></i>
    <select class="combo s" aria-label="偏移方式"><option>不偏移</option></select><i class="sep"></i>
    <label class="num">X=<span class="spin"><input value="0"><i></i></span>mm</label>
    <label class="num">Y=<span class="spin"><input value="0"><i></i></span>mm</label><i class="sep"></i>
    <label class="turn"><input type="checkbox">旋转</label>
    <label class="num"><span class="spin deg"><input value="0.000" aria-label="旋转角度"><i></i></span>°</label>
  </div></div>

  <div class="dock">
    <div class="handle"><svg viewBox="0 0 10 10"><rect x=".5" y=".5" width="9" height="9" fill="#fff" stroke="#522"/><path d="M2 3l5 5M8 3L3 8M1 1.500h8" stroke="#333"/></svg></div>
    <div class="data">
      <div class="panel dt">
        <button class="b" aria-label="首行"><svg class="i"><use href="#first"/></svg></button>
        <button class="b" aria-label="上一行"><svg class="i"><use href="#prev"/></svg></button>
        <button class="b" aria-label="下一行"><svg class="i"><use href="#next"/></svg></button>
        <button class="b" aria-label="末行"><svg class="i"><use href="#last"/></svg></button><i class="sep near"></i>
        <button class="b" aria-label="上移"><svg class="i"><use href="#up"/></svg></button>
        <button class="b" aria-label="下移"><svg class="i"><use href="#down"/></svg></button><i class="sep near"></i>
        <button class="b off"><svg class="i"><use href="#ins"/></svg>插入</button>
        <button class="b off"><svg class="i"><use href="#rem"/></svg>删除</button>
        <button class="b"><svg class="i"><use href="#scale"/></svg>缩尺配筋</button>
        <button class="b"><svg class="i"><use href="#info"/></svg>钢筋信息</button>
        <button class="b"><svg class="i"><use href="#lib"/></svg>钢筋图库</button>
        <button class="b"><svg class="i"><use href="#other"/></svg>其他<i class="car"></i></button>
        <button class="b">关闭</button><i class="sep"></i>
        <span class="total">单构件钢筋总重(kg)：180.434</span>
      </div>
      <div class="gridbox">
        <div class="gridwrap">
        <table>
          <colgroup><col style="width:32px"><col style="width:73px"><col style="width:56px"><col style="width:36px"><col style="width:33px"><col style="width:201px"><col style="width:166px"><col style="width:156px"><col style="width:61px"><col style="width:38px"><col style="width:39px"><col style="width:49px"><col style="width:61px"><col style="width:61px"><col></colgroup>
          <thead><tr><th></th><th class="hot">筋号</th><th>直径(mm)</th><th>级别</th><th>图号</th><th>图形</th><th>计算公式</th><th>公式描述</th><th>长度(mm)</th><th>根数</th><th>搭接</th><th>损耗(%)</th><th>单重(kg)</th><th>总重(kg)</th><th>钢筋归类</th></tr></thead>
          <tbody>
          <tr><th class="now">1*</th><td class="name now">横向底筋.1</td><td>16</td><td class="gr"><svg><use href="#grade"/></svg></td><td>63</td><td><div class="shape"><em>160</em><span>2069</span></div></td><td>10*d+2149-2*40+10*d</td><td class="desc">设定弯折+净长-两倍保护层+<wbr>设定弯折</td><td>2389</td><td>1</td><td>0</td><td>0</td><td>3.775</td><td>3.775</td><td class="kind">直筋</td></tr>
          <tr><th>2</th><td class="name">横向底筋.2</td><td>16</td><td class="gr"><svg><use href="#grade"/></svg></td><td>63</td><td><div class="shape"><em>160</em><span>2132</span></div></td><td>10*d+2212-2*40+10*d</td><td class="desc">设定弯折+净长-两倍保护层+<wbr>设定弯折</td><td>2452</td><td>1</td><td>0</td><td>0</td><td>3.874</td><td>3.874</td><td class="kind">直筋</td></tr>
          <tr><th>3</th><td class="name">横向底筋.3</td><td>16</td><td class="gr"><svg><use href="#grade"/></svg></td><td>63</td><td><div class="shape"><em>160</em><span>2195</span></div></td><td>10*d+2275-2*40+10*d</td><td class="desc">设定弯折+净长-两倍保护层+<wbr>设定弯折</td><td>2515</td><td>1</td><td>0</td><td>0</td><td>3.974</td><td>3.974</td><td class="kind">直筋</td></tr>
          <tr><th>4</th><td class="name">横向底筋.4</td><td>16</td><td class="gr"><svg><use href="#grade"/></svg></td><td>63</td><td><div class="shape"><em>160</em><span>2258</span></div></td><td>10*d+2338-2*40+10*d</td><td class="desc">设定弯折+净长-两倍保护层+<wbr>设定弯折</td><td>2578</td><td>1</td><td>0</td><td>0</td><td>4.073</td><td>4.073</td><td class="kind">直筋</td></tr>
          </tbody>
        </table>
        </div>
        <div class="vs tv"><svg class="ar"><use href="#u"/></svg><i class="thumb"></i><svg class="ar"><use href="#d"/></svg></div>
        <div class="hs"><svg class="ar"><use href="#l"/></svg><i class="thumb"></i><svg class="ar"><use href="#rr"/></svg></div>
      </div>
    </div>
  </div>
</section>
</main>

<footer class="status"><span class="c1">X=88976 Y=6676</span><span class="c2">层高:3.55m</span><span class="c3">底标高:-3.58m</span><span class="c4">1(1)</span><span class="c5"></span><span class="c6">138.3 FPS</span></footer>

<div class="taskbar">
  <button class="start" aria-label="开始"><svg viewBox="0 0 16 16"><path d="M0 2.300l6.500-.9v6.100H0zM7.300 1.300L16 0v7.500H7.300zM0 8.300h6.500v6.200L0 13.600zM7.300 8.300H16V16l-8.700-1.200z" fill="#fff"/></svg></button>
  <label class="search"><svg class="cort" viewBox="0 0 22 28"><ellipse cx="11" cy="14" rx="8.500" ry="9.500" fill="none" stroke="#fff" stroke-width="3"/></svg><input placeholder="在这里输入你要搜索的内容"><svg class="mic" viewBox="0 0 12 22"><rect x="3.500" y="1.500" width="5" height="12" rx="1" fill="none" stroke="#999"/><path d="M1 12v4h10v-4M6 16v5M3 21h6" fill="none" stroke="#999"/></svg></label>
  <div class="apps first">
    <button aria-label="任务视图"><svg viewBox="0 0 24 24"><path d="M7 4.500h10v15H7zM4.500 7H2.500v10h2M19.500 7h2v10h-2" fill="none" stroke="#fff" stroke-width="1.300"/></svg></button>
    <button aria-label="风扇"><svg viewBox="0 0 24 24"><g fill="#e8e8e8"><path d="M11.500 11C7 13 2 11 2 7s6-6 9-4c2 2 1 5 .5 8z"/><path d="M13 11.500c-2-4-1-9.500 4-9.500s6 5 4 8c-2 2-5 1-8 1.500z"/><path d="M12.500 13c5-2 10 0 10 4s-6 6-9 4c-2-2-1-5-1-8z"/><path d="M11 12.500c2 4 1 9.500-4 9.500s-6-5-4-8c2-2 5-1 8-1.500z"/></g></svg></button>
    <button aria-label="提醒"><svg viewBox="0 0 26 26"><path d="M17 9C11 4 2 8 3 15s9 10 14 5 1-12-4-10-6 8-1 8 5-4 2-4" fill="none" stroke="#ddd" stroke-width="1.500"/><path d="M20 0c5 0 3 6 6 10H14c3-4 1-10 6-10zM18 11h4v2h-4z" fill="#e0a010"/></svg></button>
  </div>
  <div class="apps">
    <button aria-label="Edge"><svg viewBox="0 0 24 24"><path d="M2 11C3 5 7 1 13 1c6 0 10 4 9 12H9c0 5 7 6 12 3v5c-8 4-16 1-16-7 0-4 3-6 5-7-4 0-7 2-8 4zm7-1h7c0-4-6-5-7 0z" fill="#0a7be0"/></svg></button>
    <button aria-label="商店"><svg viewBox="0 0 24 24"><path d="M1 7h22v16H1z" fill="#fff"/><path d="M8 7c0-7 8-7 8 0" fill="none" stroke="#fff" stroke-width="1.500"/><path d="M7 10h4v4H7z" fill="#f35325"/><path d="M12.500 10h4v4h-4z" fill="#81bc06"/><path d="M7 15.500h4v4H7z" fill="#05a6f0"/><path d="M12.500 15.500h4v4h-4z" fill="#ffba08"/></svg></button>
    <button aria-label="文件资源管理器"><svg viewBox="0 0 24 24"><path d="M1 2h9l1 2h11v18H1z" fill="#f8d775"/><path d="M4 22v-9h16v9h-4v-5H8v5z" fill="#35a8e0"/></svg></button>
    <button aria-label="IE"><svg viewBox="0 0 24 24"><path d="M3 13C3 6 8 3 13 3s9 4 9 11H9c1 5 7 5 8 2h5c-2 8-19 8-19-3zm6-3h8c-1-4-7-4-8 0z" fill="#55bdf3"/><path d="M2 22C-3 14 14-1 22 2c2 1 1 4 0 6" fill="none" stroke="#f4c430" stroke-width="1.800"/></svg></button>
    <button class="run" aria-label="广联达"><svg viewBox="0 0 24 24"><path d="M21 3C12-1 2 3 2 12s9 14 15 9c4-3 5-8 4-11h-8c2 2 3 5 0 6s-6-1-6-4 4-8 14-9z" fill="#1f9bea"/></svg></button>
    <button class="run" aria-label="广联达钢筋"><svg viewBox="0 0 24 24"><path d="M21 3C12-1 2 3 2 12s9 14 15 9c4-3 5-8 4-11h-8c2 2 3 5 0 6s-6-1-6-4 4-8 14-9z" fill="#2385b8"/><path d="M3 9l5-3 8 13-4 4z" fill="#d8383c"/></svg></button>
    <button class="run" aria-label="浏览器"><svg viewBox="0 0 24 24"><circle cx="12" cy="12" r="11" fill="#55b938"/><path d="M6 13h12c0-8-11-8-12 0 0 7 9 7 12 3" fill="none" stroke="#fff" stroke-width="2.500"/></svg></button>
    <button class="run act" aria-label="钢筋算量"><svg><use href="#app"/></svg></button>
    <button class="run" aria-label="便笺"><svg viewBox="0 0 24 24"><rect x="1" y="1" width="22" height="22" rx="2" fill="#f0a22e"/><path d="M5 4h13v16H5z" fill="#fff"/><path d="M7 8h9M7 11h7M7 14h5" stroke="#aaa"/><path d="M9 17L20 5l2 2-11 11z" fill="#8b5a1b"/></svg></button>
    <button class="run" aria-label="帮助"><svg viewBox="0 0 24 24"><path d="M4 10h9l2 2v11H4z" fill="#fff"/><path d="M6 14h7M6 17h7M6 20h7" stroke="#555"/><path d="M12 5c0-5 8-5 8 0 0 3-4 3-4 6M16 13v3" fill="none" stroke="#f4e500" stroke-width="2.500"/></svg></button>
  </div>
  <div class="cpu"><span>32%</span><span>CPU使用</span></div>
  <div class="tray">
    <svg viewBox="0 0 20 20"><path d="M4 13l6-6 6 6" fill="none" stroke="#fff" stroke-width="1.500"/></svg>
    <svg viewBox="0 0 20 20"><rect x="7" y="7" width="11" height="7" fill="#ddd" stroke="#fff"/><path d="M2 4h6v3L6 9v5M3 2v2M6 2v2" fill="none" stroke="#fff" stroke-width="1.300"/></svg>
    <svg viewBox="0 0 20 20"><g fill="none" stroke="#aaa" stroke-width="1.300"><path d="M4 17C4 9 9 4 17 4M8 17c0-5 4-9 9-9M12 17c0-3 2-5 5-5"/></g><circle cx="15" cy="16" r="1.500" fill="#fff"/></svg>
    <svg viewBox="0 0 20 20"><path d="M2 8h3l4-4v12l-4-4H2zM11 7c2 2 2 4 0 6M13.500 5c3 3 3 7 0 10" fill="none" stroke="#fff" stroke-width="1.200"/><path d="M16 3c4 4 4 10 0 14" fill="none" stroke="#888"/></svg>
    <svg class="kb" viewBox="0 0 24 20"><rect x=".7" y="4.500" width="22.600" height="12" fill="none" stroke="#fff" stroke-width="1.300"/><path d="M3 8h18M3 10.500h18" stroke="#fff" stroke-dasharray="1.500 1.500"/><path d="M5 13.500h14" stroke="#fff"/></svg>
    <span>中</span>
    <svg><use href="#sogou"/></svg>
  </div>
  <div class="clock"><span>10:50</span><span>2017/11/21</span></div>
  <button class="note" aria-label="通知中心"><svg viewBox="0 0 32 30"><path d="M2 3h16v12H8l-3 3v-3H2z" fill="#fff"/><path d="M5 7h10M5 10h10" stroke="#000"/><circle cx="17" cy="19" r="10" fill="#444" stroke="#999"/></svg><b>20</b></button>
</div>
<script src="scene.js"></script>
</body>
</html>
```
FILE: scene.js
```js
// Rebar mesh of the pile cap: [y at mid span, left x, right x]
const rows = [
  [266,478,791],[275,480,802],[284,482,813],[293,484,825],[303,486,837],[312,488,848],[321,489,860],
  [330,491,872],[340,495,885],[349,508,895],[357,517,905],[364,525,913],[373,537,923],[382,548,937],
  [392,560,950],[401,572,953],[410,583,954],[419,597,957],[429,608,959],[438,621,961],[447,632,963]
];
const tilt = 0.006;
document.getElementById('rows').setAttribute('d', rows.map(([y, a, b]) =>
  `M${a} ${y + (640 - a) * tilt}L${b} ${y - (b - 640) * tilt}`).join(''));

let bars = '', hooks = '';
for (let k = -1; k < 34; k++) {
  const x = 475 + 15.4 * k;
  bars += `M${x} 264L${x + 39} 448`;
  if (k >= 0 && x < 792) hooks += `M${x} 266V256L${x + 2} 245`;
}
for (let x = 638; x < 955; x += 15.35) hooks += `M${x - 5} 428L${x - 1} 446H${x + 1}L${x + 4} 429`;

// Upturned ends along the right slope
[[600,253,595,320],[612,268,602,327],[648,295,643,350],[655,295,650,362],[684,322,677,380],[711,340,707,410],
 [720,352,712,410],[757,380,750,440],[768,385,760,445],[789,405,783,462],[825,427,818,495],[861,463,853,520],
 [879,472,873,540],[894,490,886,550],[921,512,914,572],[936,516,928,580],[950,530,940,590],[985,560,978,620],
 [991,560,983,625],[1018,587,1012,645],[1048,605,1042,670],[1053,612,1048,690],[1060,640,1055,720],
 [1066,670,1062,750],[1075,710,1070,785],[1086,755,1080,840]]
  .forEach(([a, b, c, d]) => { hooks += `M${600 + a / 3} ${165 + b / 3}L${600 + c / 3} ${165 + d / 3}`; });

// Ends along the left edges
[[477,266],[480,285],[483,302],[486,313],[489,330],[492,340],[510,353],[529,368],[548,383],[566,396],[585,411],[600,420],[621,440]]
  .forEach(([x, y]) => { hooks += `M${x - 1} ${y - 20}L${x} ${y}L${x + 4} ${y - 18}M${x - 3} ${y - 6}L${x} ${y}`; });
document.getElementById('bars').setAttribute('d', bars);
document.getElementById('hooks').setAttribute('d', hooks);
```
FILE: styles.css
```css
* { box-sizing: border-box; }
html, body { height: 100%; }
body {
  margin: 0; display: flex; flex-direction: column; overflow: hidden;
  background: #f0f0f0; color: #000;
  font: 12px/16px "Open Sans", "Noto Sans CJK SC", sans-serif;
}
button { font: inherit; color: inherit; background: none; border: 0; padding: 0; margin: 0; white-space: nowrap; }
svg { display: block; flex: none; }
.defs { position: absolute; width: 0; height: 0; }
.i { width: 16px; height: 16px; }
.ar { width: 8px; height: 8px; }

.titlebar { position: relative; height: 24px; flex: none; display: flex; align-items: center; gap: 5px; padding-left: 2px; background: #fff; }
.title { white-space: nowrap; flex: 1; }
.title span { font: 13px/16px Roboto, sans-serif; }
.ime { position: absolute; z-index: 5; left: 866px; top: 3px; height: 24px; width: 187px; display: flex; align-items: center; gap: 6px; padding-left: 35px; background: #fff; border: 1px solid #a9c4e0; }
.ime b { color: #1f76c8; font-size: 15px; line-height: 20px; }
.ime .sg { position: absolute; left: 1px; top: -4px; width: 27px; height: 27px; }
.ime .leaf { position: absolute; left: -3px; top: -4px; width: 40px; height: 10px; }
.winctl { display: flex; }
.winctl button { width: 46px; height: 22px; display: grid; place-items: center; }
.winctl svg { width: 10px; height: 10px; }

.panel { display: flex; align-items: center; height: 27px; background: linear-gradient(#fcfcfc, #f1f1f1); border-radius: 2px; }
.b { display: flex; align-items: center; gap: 4px; padding: 0 4px; height: 24px; flex: none; }
.b.off { color: #8a8a8a; }
.b.on { background: #dcebf8; border: 1px solid #0078d7; padding: 0 3px; }
.sep { width: 1px; height: 16px; margin-left: 3px; background: #b4b4b4; flex: none; }
.sep.w { margin-left: 6px; }
.sep.near { margin-left: 0; }
.car { border: 3px solid transparent; border-top-color: currentColor; border-bottom: 0; margin: 0 -1px 0 -2px; }
.car.wide { margin: 0 0 0 2px; }
.grip { width: 4px; height: 16px; margin-left: 3px; flex: none; background: radial-gradient(circle at 2px 2px, #b0b0b0 1px, transparent 1px) 0 0 / 4px 4px; }
.more { font-weight: bold; font-size: 13px; line-height: 12px; align-self: flex-start; padding-bottom: 4px; }

.menurow { display: flex; align-items: center; height: 28px; margin-bottom: 1px; flex: none; }
.menu { gap: 11px; padding-left: 7px; }
.menurow .panel { background: #f0f0f0; }
.menurow .change { margin-left: 12px; }
.tip { margin-left: 32px; color: #00646c; text-decoration: none; white-space: nowrap; }
.menurow .account { margin-left: auto; width: 240px; background: #f8f8f8; }
.bean { margin: 0 4px 0 5px; white-space: nowrap; }
.account .more, .view .more { margin-left: auto; padding-right: 4px; }

.toprow { display: flex; height: 29px; align-items: center; flex: none; }
.std { width: 153px; }
.std .more { margin-left: auto; padding-right: 5px; }
.calc { width: 549px; margin-right: 2px; }
.calc .more { margin-left: auto; padding-right: 4px; }
.view { flex: 1; }

.work { flex: 1; display: flex; min-height: 0; padding-top: 2px; }
.side { width: 198px; margin-right: 4px; flex: none; display: flex; flex-direction: column; gap: 1px; font-family: "Liberation Serif", "Noto Sans CJK SC", serif; }
.sidehead { display: flex; align-items: center; gap: 8px; height: 16px; background: #0052e3; color: #fff; padding-right: 5px; font-size: 13px; line-height: 16px; }
.sidehead span { flex: 1; }
.sidehead svg { width: 10px; height: 10px; }
.nav { height: 22px; border: 1px solid #a0a0a0; background: #f0f0f0; margin-right: 1px; flex: none; }
.expand { height: 25px; padding: 4px 0 0 6px; border: 1px solid #a0a0a0; border-bottom: 0; margin-right: 1px; background: linear-gradient(#fff, #f1f1f1); flex: none; }
.expand svg { width: 42px; height: 18px; }
.treebox { flex: 1; min-height: 0; display: flex; overflow: hidden; margin: 0 1px; border: 2px solid #828790; background: #fff; }
.tree { list-style: none; margin: 0; padding: 0; flex: 1; overflow: hidden; }
.tree li { display: flex; align-items: center; height: 16px; gap: 5px; white-space: nowrap; }
.lf { padding-left: 12px; }
.lf::before {
  content: ""; width: 30px; height: 16px; margin-right: -5px; flex: none;
  --v: repeating-linear-gradient(#999 0 1px, transparent 1px 2px);
  background: var(--v) 0 0 / 1px 100% no-repeat, var(--v) 19px 0 / 1px var(--h, 100%) no-repeat,
    repeating-linear-gradient(90deg, #999 0 1px, transparent 1px 2px) 19px 8px / 11px 1px no-repeat;
}
.lf.end::before { --h: 50%; }
.fd { padding-left: 8px; }
.fd .ar { margin-right: 2px; }
.cur { display: flex; align-items: center; gap: 5px; height: 16px; background: #d9d9d9; padding-right: 5px; }
.vs { width: 16px; flex: none; display: flex; flex-direction: column; align-items: center; background: #f0f0f0; padding: 5px 0; }
.vs .thumb { width: 15px; flex: none; height: 355px; margin-top: 39px; margin-bottom: auto; background: #cdcdcd; }

.right { flex: 1; min-width: 0; display: flex; flex-direction: column; }
.row { display: flex; align-items: center; height: 27px; padding-left: 1px; flex: none; gap: 1px; }
.r2 { margin-bottom: 1px; }
.r3 { margin-bottom: 2px; }
.tight .b { gap: 3px; }
.stub { width: 30px; }
.stub .grip { margin-left: 4px; }
.combo {
  appearance: none; width: 69px; height: 23px; margin: 0 2px 0 1px; padding: 0 12px 0 2px; border: 0; border-radius: 0; font: inherit; color: #000;
  background: conic-gradient(from -45deg at 50% 100%, #222 90deg, transparent 0) right 3px top 10px / 6px 3px no-repeat, linear-gradient(#f3f3f3, #f3f3f3) right / 12px 100% no-repeat, #fff;
}
.combo.s { width: 57px; }
.combo.box { width: 55px; border: 1px solid #8a8a8a; margin-right: 0; }
.canvas { position: relative; flex: 1; min-height: 0; background: #000; overflow: hidden; }
.scene { width: 100%; height: 100%; }
.axis { fill: #e8e8e8; font: 14px "Liberation Sans", sans-serif; text-anchor: middle; }
.float { position: absolute; left: 10px; top: 3px; width: 167px; height: 178px; background: #fff; border: 1px solid #777; display: flex; flex-direction: column; box-shadow: 0 0 8px #0008; }
.float h2 { margin: 0; font: inherit; line-height: 30px; padding-left: 7px; color: #999; }
.checks { flex: 1; border: 1px solid #828790; padding: 1px 3px; font-family: "Liberation Serif", "Noto Sans CJK SC", serif; }
.checks label { display: flex; align-items: center; gap: 4px; height: 12px; line-height: 12px; }
input[type=checkbox] { appearance: none; width: 11px; height: 11px; margin: 0; border: 1px solid #777; background: #fff; flex: none; display: grid; place-items: center; }
input[type=checkbox]:checked::before { content: ""; width: 7px; height: 4px; border: solid #333; border-width: 0 0 1px 1px; transform: rotate(-45deg); margin-bottom: 2px; }

.snap { height: 28px; margin: 1px 0; }
.snap .b { gap: 3px; }
.snap .panel { padding-right: 1px; }
.num { display: flex; align-items: center; gap: 2px; color: #777; margin-left: 3px; }
.num + .num { margin-left: 5px; }
.spin { display: flex; width: 58px; height: 23px; border: 1px solid #777; background: #f2f2f2; }
.spin.deg { width: 69px; }
.spin input { flex: 1; min-width: 0; border: 0; padding: 0 4px 0 0; background: none; font: inherit; color: #888; text-align: right; }
.spin i { width: 12px; background: conic-gradient(from 135deg at 50% 0, #666 90deg, transparent 0) 4px 4px / 6px 3px no-repeat, conic-gradient(from -45deg at 50% 100%, #666 90deg, transparent 0) 4px 15px / 6px 3px no-repeat; }
.turn { display: flex; align-items: center; gap: 9px; margin: 0 0 0 3px; }
.snap .turn input { background: #f4f4f4; }

.dock { height: 203px; flex: none; display: flex; }
.handle { width: 11px; margin: 3px 1px 4px 1px; background: radial-gradient(circle at 2px 2px, #b4b4b4 1px, transparent 1px) 0 2px / 5px 5px; }
.handle svg { width: 10px; height: 10px; background: #f0f0f0; }
.data { flex: 1; min-width: 0; display: flex; flex-direction: column; }
.dt { height: 27px; margin: 3px 1px 1px 0; flex: none; }
.dt .b { gap: 3px; }
.total { margin-left: 6px; white-space: nowrap; }
.gridbox { flex: 1; min-height: 0; display: grid; grid-template: 1fr 17px / 1fr 17px; border: 1px solid #828790; margin-right: 2px; background: #f0f0f0; }
.gridwrap { overflow: hidden; min-height: 0; }
table { border-collapse: collapse; table-layout: fixed; width: 100%; font: 11px/12px "Liberation Sans", "Noto Sans CJK SC", sans-serif; }
th, td { padding: 0 2px; border-right: 1px solid #b8b8b8; border-bottom: 1px solid #b8b8b8; text-align: left; font-weight: normal; white-space: nowrap; }
thead th { height: 19px; text-align: center; background: linear-gradient(#fff, #ececec); font: 12px/16px "Liberation Serif", "Noto Sans CJK SC", serif; padding: 1px 0 0; }
thead th.hot { background: linear-gradient(#fbd692, #f4bf62); color: #600060; }
tbody tr { height: 34px; background: #ccffdb; }
tbody th { background: linear-gradient(90deg, #fff, #f0f0f0); text-align: center; padding-right: 8px; }
tbody th.now { background: #ffd28c; color: #600060; padding-right: 2px; }
.name { border-right: 2px solid #000; font: 12px/16px "Liberation Sans", "Noto Sans CJK SC", sans-serif; }
.name.now { background: #abe8d8; }
.gr svg { width: 10px; height: 10px; margin: auto; }
.desc, .kind { font: 12px/12px "Liberation Sans", "Noto Sans CJK SC", sans-serif; }
.desc { white-space: normal; word-break: break-all; padding-right: 0; }
.shape { display: flex; align-items: center; gap: 5px; padding-left: 14px; }
.shape em { font-style: normal; color: #e00; }
.shape span { width: 121px; height: 15px; border: solid #000; border-width: 0 2px 2px; text-align: center; line-height: 13px; }
.tv { width: 17px; padding: 4px 0 4px; }
.tv .thumb { height: 17px; margin-top: 5px; }
.hs { grid-column: 1 / 3; display: flex; align-items: center; padding: 0 21px 0 4px; gap: 5px; }
.hs .thumb { width: 728px; height: 15px; background: #cdcdcd; margin-right: auto; }

.status { display: flex; gap: 2px; height: 22px; padding-top: 1px; flex: none; font-family: "Liberation Serif", "Noto Sans CJK SC", serif; }
.status span { border: 1px solid #d0d0d0; background: linear-gradient(#fdfdfd, #f0f0f0); padding-left: 1px; line-height: 19px; white-space: nowrap; flex: none; }
.c1 { width: 148px; } .c2 { width: 78px; } .c3 { width: 98px; } .c4 { width: 48px; } .c6 { width: 71px; }
.status .c5 { flex: 1; }

.taskbar { height: 40px; flex: none; display: flex; background: #020a0c; color: #fff; }
.start { width: 48px; background: #000; display: grid; place-items: center; }
.start svg { width: 16px; height: 18px; }
.search { width: 344px; background: #333; display: flex; align-items: center; padding: 0 14px 0 8px; gap: 6px; }
.cort { width: 22px; height: 28px; }
.search input { flex: 1; min-width: 0; background: none; border: 0; padding: 0; color: #fff; font: 14px/20px "Open Sans", "Noto Sans CJK SC", sans-serif; }
.search input::placeholder { color: #a0a0a0; }
.mic { width: 12px; height: 22px; }
.apps { display: flex; }
.apps button { width: 42px; margin-right: 1px; height: 40px; display: grid; place-items: center; border-bottom: 3px solid transparent; }
.apps.first { margin-left: -2px; }
.apps.first button { width: 50px; }
.apps svg { width: 24px; height: 24px; }
.apps .run { width: 40px; margin-right: 2px; border-bottom-color: #76b9ed; }
.apps .act { background: #3a4447; }
.cpu, .clock { display: flex; flex-direction: column; justify-content: center; align-items: center; line-height: 18px; white-space: nowrap; }
.cpu { width: 68px; margin-left: auto; }
.tray { display: flex; align-items: center; gap: 6px; margin-left: 3px; margin-right: 3px; font-size: 14px; }
.tray svg { width: 19px; height: 19px; }
.tray .kb { width: 24px; }
.tray svg:last-child { width: 16px; height: 16px; margin-left: 5px; }
.tray svg:first-child { width: 16px; }
.clock { width: 92px; }
.note { position: relative; width: 48px; display: grid; place-items: center; }
.note svg { width: 32px; height: 30px; }
.note b { position: absolute; left: 18px; top: 17px; font-size: 12px; line-height: 16px; }
```
